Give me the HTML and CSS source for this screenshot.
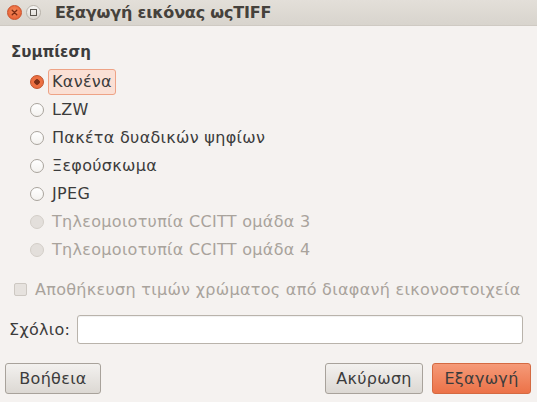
FILE: index.html
```html
<!DOCTYPE html>
<html lang="el">
<head>
<meta charset="utf-8">
<title>Εξαγωγή εικόνας ωςTIFF</title>
<link rel="stylesheet" href="styles.css">
</head>
<body>
<div class="window">
  <div class="titlebar">
    <span class="wbtn close"><svg width="15" height="15" viewBox="0 0 15 15"><path d="M5.2 5.2 L9.8 9.8 M9.8 5.2 L5.2 9.8" stroke="#7a2a12" stroke-width="1.3" stroke-linecap="round"/></svg></span>
    <span class="wbtn max"><svg width="15" height="15" viewBox="0 0 15 15"><rect x="4.5" y="4.5" width="6" height="6" fill="none" stroke="#5a5650" stroke-width="1"/></svg></span>
    <span class="title">Εξαγωγή εικόνας ωςTIFF</span>
  </div>
  <div class="content">
    <div class="heading">Συμπίεση</div>
    <div class="radios">
      <div class="row"><span class="radio checked"></span><span class="label focus">Κανένα</span></div>
      <div class="row"><span class="radio"></span><span class="label">LZW</span></div>
      <div class="row"><span class="radio"></span><span class="label">Πακέτα δυαδικών ψηφίων</span></div>
      <div class="row"><span class="radio"></span><span class="label">Ξεφούσκωμα</span></div>
      <div class="row"><span class="radio"></span><span class="label">JPEG</span></div>
      <div class="row disabled"><span class="radio"></span><span class="label">Τηλεομοιοτυπία CCITT ομάδα 3</span></div>
      <div class="row disabled"><span class="radio"></span><span class="label">Τηλεομοιοτυπία CCITT ομάδα 4</span></div>
    </div>
    <div class="check disabled"><span class="box"></span><span class="label">Αποθήκευση τιμών χρώματος από διαφανή εικονοστοιχεία</span></div>
    <div class="comment"><span class="clabel">Σχόλιο:</span><span class="entry"></span></div>
    <div class="buttons">
      <span class="btn help">Βοήθεια</span>
      <span class="spacer"></span>
      <span class="btn cancel">Ακύρωση</span>
      <span class="btn primary">Εξαγωγή</span>
    </div>
  </div>
</div>
</body>
</html>
```
FILE: styles.css
```css
html, body {
  margin: 0;
  padding: 0;
}
body {
  width: 537px;
  height: 402px;
  overflow: hidden;
  background: #f5f2f0;
  font-family: "DejaVu Sans", "Open Sans", sans-serif;
  font-size: 16px;
  letter-spacing: 0.3px;
  color: #3c3c3c;
}
.window {
  width: 537px;
  height: 402px;
  display: flex;
  flex-direction: column;
}
.titlebar {
  height: 26px;
  flex: none;
  display: flex;
  align-items: center;
  background: linear-gradient(#e3dfd9, #d8d4cd);
  border-bottom: 1px solid #cfcac3;
  box-sizing: border-box;
  padding-left: 7px;
}
.wbtn {
  width: 15px;
  height: 15px;
  border-radius: 50%;
  display: inline-flex;
  margin-right: 4px;
  box-sizing: border-box;
}
.wbtn.close {
  background: radial-gradient(circle at 50% 40%, #f58a5c, #e5582b);
  border: 1px solid #c9502a;
}
.wbtn.max {
  background: linear-gradient(#f7f6f4, #dcd8d2);
  border: 1px solid #b8b3ab;
}
.wbtn svg { margin: -1px; }
.title {
  margin-left: 10px;
  font-weight: bold;
  font-size: 16px;
  letter-spacing: -0.2px;
  color: #45413c;
}
.content {
  flex: 1;
  display: flex;
  flex-direction: column;
  padding: 17px 14px 0 11px;
}
.heading {
  height: 18px;
  line-height: 18px;
  font-weight: bold;
  font-size: 15px;
  letter-spacing: 0;
  color: #3c3c3c;
}
.radios {
  margin-top: 7px;
  display: flex;
  flex-direction: column;
}
.row {
  height: 28px;
  display: flex;
  align-items: center;
  padding-left: 19px;
}
.radio {
  width: 14px;
  height: 14px;
  border-radius: 50%;
  box-sizing: border-box;
  border: 1px solid #a9a49d;
  background: linear-gradient(#ffffff, #f4f2ef);
  flex: none;
}
.radio.checked {
  border-color: #c0522b;
  background: radial-gradient(circle at 50% 50%, #7a2f17 0, #7a2f17 2.5px, #ee7244 3px, #e86a3c 100%);
}
.row .label {
  margin-left: 8px;
  line-height: 20px;
}
.row .label.focus {
  margin-left: 4px;
  padding: 2px 3px;
  background: #fae0d5;
  border: 1px solid #eea386;
  border-radius: 3px;
}
.disabled .radio {
  background: #e3dfdb;
  border-color: #d3cec8;
}
.disabled .label {
  color: #a9a39c;
}
.check {
  margin-top: 16px;
  height: 18px;
  display: flex;
  align-items: center;
  padding-left: 3px;
}
.check .box {
  width: 13px;
  height: 13px;
  box-sizing: border-box;
  border: 1px solid #cdc8c2;
  background: #e6e2de;
  border-radius: 2px;
  margin-right: 8px;
}
.comment {
  margin-top: 17px;
  display: flex;
  align-items: center;
  margin-left: -2px;
}
.clabel {
  width: 68px;
  flex: none;
}
.entry {
  flex: 1;
  height: 29px;
  box-sizing: border-box;
  background: #ffffff;
  border: 1px solid #b9b3ab;
  border-radius: 3px;
  box-shadow: inset 0 1px 1px rgba(0,0,0,0.06);
}
.buttons {
  margin-top: 19px;
  margin-left: -6px;
  margin-right: -8px;
  display: flex;
  align-items: center;
}
.spacer { flex: 1; }
.btn {
  height: 31px;
  box-sizing: border-box;
  display: inline-flex;
  align-items: center;
  justify-content: center;
  border: 1px solid #a8a29b;
  border-radius: 3px;
  background: linear-gradient(#f3f1ef, #dcd8d3);
  color: #3c3c3c;
}
.btn.help { width: 96px; }
.btn.cancel { width: 98px; margin-right: 9px; }
.btn.primary {
  width: 99px;
  background: linear-gradient(#f59a78, #ec7248);
  border-color: #d46a42;
}
```
